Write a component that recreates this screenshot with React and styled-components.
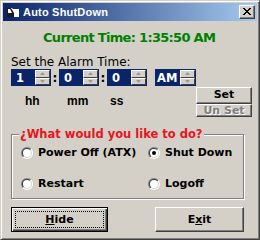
import React from 'react';
import styled, { createGlobalStyle } from 'styled-components';

const face = '#D4D0C8';

const GlobalStyle = createGlobalStyle`
  html, body { margin: 0; padding: 0; background: ${face}; }
  * { box-sizing: border-box; }
`;

const Window = styled.div`
  width: 260px;
  height: 240px;
  background: ${face};
  border: 1px solid;
  border-color: ${face} #404040 #404040 ${face};
  box-shadow: inset 1px 1px 0 #fff, inset -1px -1px 0 #808080;
  padding: 2px;
  display: flex;
  flex-direction: column;
  font-family: "DejaVu Sans", Verdana, sans-serif;
  color: #000;
`;

const TitleBar = styled.div`
  height: 18px;
  flex: none;
  display: flex;
  align-items: center;
  padding: 0 2px 0 2px;
  background: linear-gradient(to right, #0A246A, #A6CAF0);
`;

const TitleText = styled.span`
  flex: 1;
  margin-left: 2px;
  color: #fff;
  font-family: "Liberation Sans", Arial, sans-serif;
  font-weight: bold;
  font-size: 11px;
  letter-spacing: 0.2px;
`;

const CloseButton = styled.div`
  width: 16px;
  height: 14px;
  background: ${face};
  border: 1px solid;
  border-color: #fff #404040 #404040 #fff;
  box-shadow: inset -1px -1px 0 #808080;
  display: flex;
  align-items: center;
  justify-content: center;
  padding: 0 1px 1px 0;
`;

const Content = styled.div`
  flex: 1;
  display: flex;
  flex-direction: column;
  padding: 0 5px 0 8px;
`;

const CurrentTime = styled.div`
  margin-top: 9px;
  padding-left: 32px;
  color: #008000;
  font-weight: bold;
  font-size: 13px;
  letter-spacing: -0.7px;
  line-height: 15px;
`;

const AlarmLabel = styled.div`
  margin-top: 10px;
  font-size: 12px;
  line-height: 14px;
`;

const SpinRow = styled.div`
  display: flex;
  align-items: center;
  height: 17px;
`;

const SpinBox = styled.div`
  width: ${p => p.$w}px;
  height: 17px;
  margin-left: ${p => p.$ml || 0}px;
  background: #0A246A;
  display: flex;
  align-items: center;
  justify-content: space-between;
  padding: 0 1px 0 ${p => p.$pl}px;
  color: #fff;
  font-weight: bold;
  font-size: 11.5px;
`;

const Spinner = styled.div`
  width: 15px;
  height: 15px;
  display: flex;
  flex-direction: column;
`;

const SpinHalf = styled.div`
  flex: 1;
  background: ${face};
  border: 1px solid;
  border-color: #fff #404040 #404040 #fff;
  display: flex;
  align-items: center;
  justify-content: center;
`;

const Colon = styled.span`
  width: 8px;
  text-align: center;
  font-weight: bold;
  font-size: 12px;
`;

const LowerRow = styled.div`
  display: flex;
  justify-content: space-between;
  margin-top: 1px;
`;

const Units = styled.div`
  display: grid;
  grid-template-columns: 42px 43px auto;
  align-self: flex-start;
  padding: 7px 0 0 14px;
  font-family: "Liberation Sans", Arial, sans-serif;
  font-weight: bold;
  font-size: 12px;
  line-height: 14px;
`;

const SetColumn = styled.div`
  width: 56px;
  display: flex;
  flex-direction: column;
`;

const SmallButton = styled.div`
  height: ${p => p.$h}px;
  background: ${face};
  border: 1px solid;
  border-color: #fff #404040 #404040 #fff;
  box-shadow: inset -1px -1px 0 #808080;
  overflow: hidden;
  text-align: center;
  font-weight: bold;
  font-size: 11px;
  line-height: ${p => p.$lh}px;
  color: ${p => (p.$disabled ? '#808080' : '#000')};
  text-shadow: ${p => (p.$disabled ? '1px 1px 0 #fff' : 'none')};
`;

const Group = styled.div`
  margin: 17px 8px 0 0;
  height: 65px;
  border: 1px solid #808080;
  box-shadow: 1px 1px 0 #fff, inset 1px 1px 0 #fff;
  display: flex;
  flex-direction: column;
  padding: 0 0 0 9px;
`;

const Legend = styled.div`
  align-self: flex-start;
  margin: -8px 0 0 -2px;
  padding: 0 1px;
  background: ${face};
  color: #E8141E;
  font-weight: bold;
  font-size: 11.5px;
  line-height: 15px;
`;

const RadioGrid = styled.div`
  display: grid;
  grid-template-columns: 127px auto;
  grid-auto-rows: 31px;
  margin-top: -5px;
`;

const RadioItem = styled.label`
  display: flex;
  align-items: center;
  gap: 5px;
  font-weight: bold;
  font-size: 11px;
`;

const ButtonRow = styled.div`
  display: flex;
  justify-content: space-between;
  margin: 8px 8px 0 0;
`;

const BigButton = styled.div`
  width: ${p => p.$w}px;
  height: 25px;
  background: ${face};
  border: 1px solid;
  border-color: ${p => (p.$default ? '#000' : '#fff #404040 #404040 #fff')};
  box-shadow: ${p =>
    p.$default
      ? 'inset 1px 1px 0 #fff, inset -1px -1px 0 #404040, inset -2px -2px 0 #808080'
      : 'inset -1px -1px 0 #808080'};
  display: flex;
  padding: 3px;
  font-weight: bold;
  font-size: 11px;
`;

const ButtonFace = styled.div`
  flex: 1;
  display: flex;
  align-items: center;
  justify-content: center;
  border: 1px dotted ${p => (p.$focus ? '#000' : 'transparent')};
`;

function AppIcon() {
  return (
    <svg width="16" height="16" viewBox="0 0 16 16">
      <path d="M2 4 H7 L8 5 H14 V13 H2 Z" fill="#fff" />
      <path d="M2 4 H6 L9 9 V13 H2 Z" fill="#1a1a1a" />
      <path d="M3 5 H5 L7 9 H3 Z" fill="#fff" />
    </svg>
  );
}

function CloseGlyph() {
  return (
    <svg width="8" height="7" viewBox="0 0 8 7" shapeRendering="crispEdges">
      <path d="M0 0h2v1h-2zM6 0h2v1h-2zM1 1h2v1h-2zM5 1h2v1h-2zM2 2h4v1h-4zM3 3h2v1h-2zM2 4h4v1h-4zM1 5h2v1h-2zM5 5h2v1h-2zM0 6h2v1h-2zM6 6h2v1h-2z" fill="#000" />
    </svg>
  );
}

function Arrow({ up }) {
  return (
    <svg width="5" height="3" viewBox="0 0 5 3">
      <path d={up ? 'M2.5 0 L5 3 H0 Z' : 'M0 0 H5 L2.5 3 Z'} fill="#9a9a9a" />
    </svg>
  );
}

function Spin() {
  return (
    <Spinner>
      <SpinHalf><Arrow up /></SpinHalf>
      <SpinHalf><Arrow /></SpinHalf>
    </Spinner>
  );
}

function Radio({ checked }) {
  return (
    <svg width="12" height="12" viewBox="0 0 12 12">
      <defs>
        <linearGradient id="rOut" x1="0" y1="0" x2="1" y2="1">
          <stop offset="0.5" stopColor="#808080" />
          <stop offset="0.5" stopColor="#fff" />
        </linearGradient>
        <linearGradient id="rIn" x1="0" y1="0" x2="1" y2="1">
          <stop offset="0.5" stopColor="#404040" />
          <stop offset="0.5" stopColor={face} />
        </linearGradient>
      </defs>
      <circle cx="6" cy="6" r="6" fill="url(#rOut)" />
      <circle cx="6" cy="6" r="5" fill="url(#rIn)" />
      <circle cx="6" cy="6" r="4" fill="#fff" />
      {checked && <circle cx="6" cy="6" r="2" fill="#000" />}
    </svg>
  );
}

export default function App() {
  return (
    <>
      <GlobalStyle />
      <Window>
        <TitleBar>
          <AppIcon />
          <TitleText>Auto ShutDown</TitleText>
          <CloseButton><CloseGlyph /></CloseButton>
        </TitleBar>
        <Content>
          <CurrentTime>Current Time: 1:35:50 AM</CurrentTime>
          <AlarmLabel>Set the Alarm Time:</AlarmLabel>
          <SpinRow>
            <SpinBox $w={40} $pl={5}>1<Spin /></SpinBox>
            <Colon>:</Colon>
            <SpinBox $w={40} $pl={5}>0<Spin /></SpinBox>
            <Colon>:</Colon>
            <SpinBox $w={40} $pl={5}>0<Spin /></SpinBox>
            <SpinBox $w={41} $pl={2} $ml={8}>AM<Spin /></SpinBox>
          </SpinRow>
          <LowerRow>
            <Units>
              <span>hh</span>
              <span>mm</span>
              <span>ss</span>
            </Units>
            <SetColumn>
              <SmallButton $h={17} $lh={14}>Set</SmallButton>
              <SmallButton $h={13} $lh={12} $disabled>Un Set</SmallButton>
            </SetColumn>
          </LowerRow>
          <Group>
            <Legend>¿What would you like to do?</Legend>
            <RadioGrid>
              <RadioItem><Radio />Power Off (ATX)</RadioItem>
              <RadioItem><Radio checked />Shut Down</RadioItem>
              <RadioItem><Radio />Restart</RadioItem>
              <RadioItem><Radio />Logoff</RadioItem>
            </RadioGrid>
          </Group>
          <ButtonRow>
            <BigButton $w={97} $default>
              <ButtonFace $focus><span><u>H</u>ide</span></ButtonFace>
            </BigButton>
            <BigButton $w={89}>
              <ButtonFace><span>E<u>x</u>it</span></ButtonFace>
            </BigButton>
          </ButtonRow>
        </Content>
      </Window>
    </>
  );
}
